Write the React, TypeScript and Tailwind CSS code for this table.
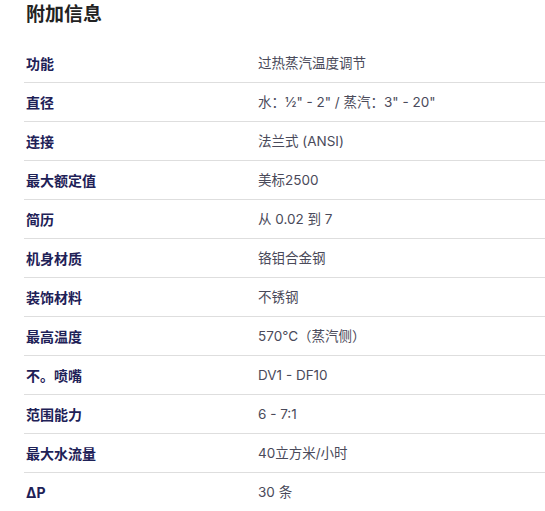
const rows: [string, string][] = [
  ['功能', '过热蒸汽温度调节'],
  ['直径', '水：½" - 2" / 蒸汽：3" - 20"'],
  ['连接', '法兰式 (ANSI)'],
  ['最大额定值', '美标2500'],
  ['简历', '从 0.02 到 7'],
  ['机身材质', '铬钼合金钢'],
  ['装饰材料', '不锈钢'],
  ['最高温度', '570°C（蒸汽侧）'],
  ['不。喷嘴', 'DV1 - DF10'],
  ['范围能力', '6 - 7:1'],
  ['最大水流量', '40立方米/小时'],
  ['ΔP', '30 条'],
];

export default function App() {
  return (
    <main
      className="min-h-screen bg-white pl-6"
      style={{ fontFamily: 'Inter, "Noto Sans CJK SC", sans-serif' }}
    >
      {/* Section title */}
      <h2 className="pl-[2px] pt-[1px] text-[19px] leading-7 font-bold text-[#222]">附加信息</h2>

      <div className="mt-[15px]">
        {rows.map(([label, value]) => (
          <div key={label} className="flex h-[39px] items-center border-b border-[#dedede]">
            <div className="w-[234px] shrink-0 pl-[2px] text-[14px] font-bold text-[#1e2157]">{label}</div>
            <div className="text-[13.5px] text-[#4a4a5a]">{value}</div>
          </div>
        ))}
      </div>
    </main>
  );
}
